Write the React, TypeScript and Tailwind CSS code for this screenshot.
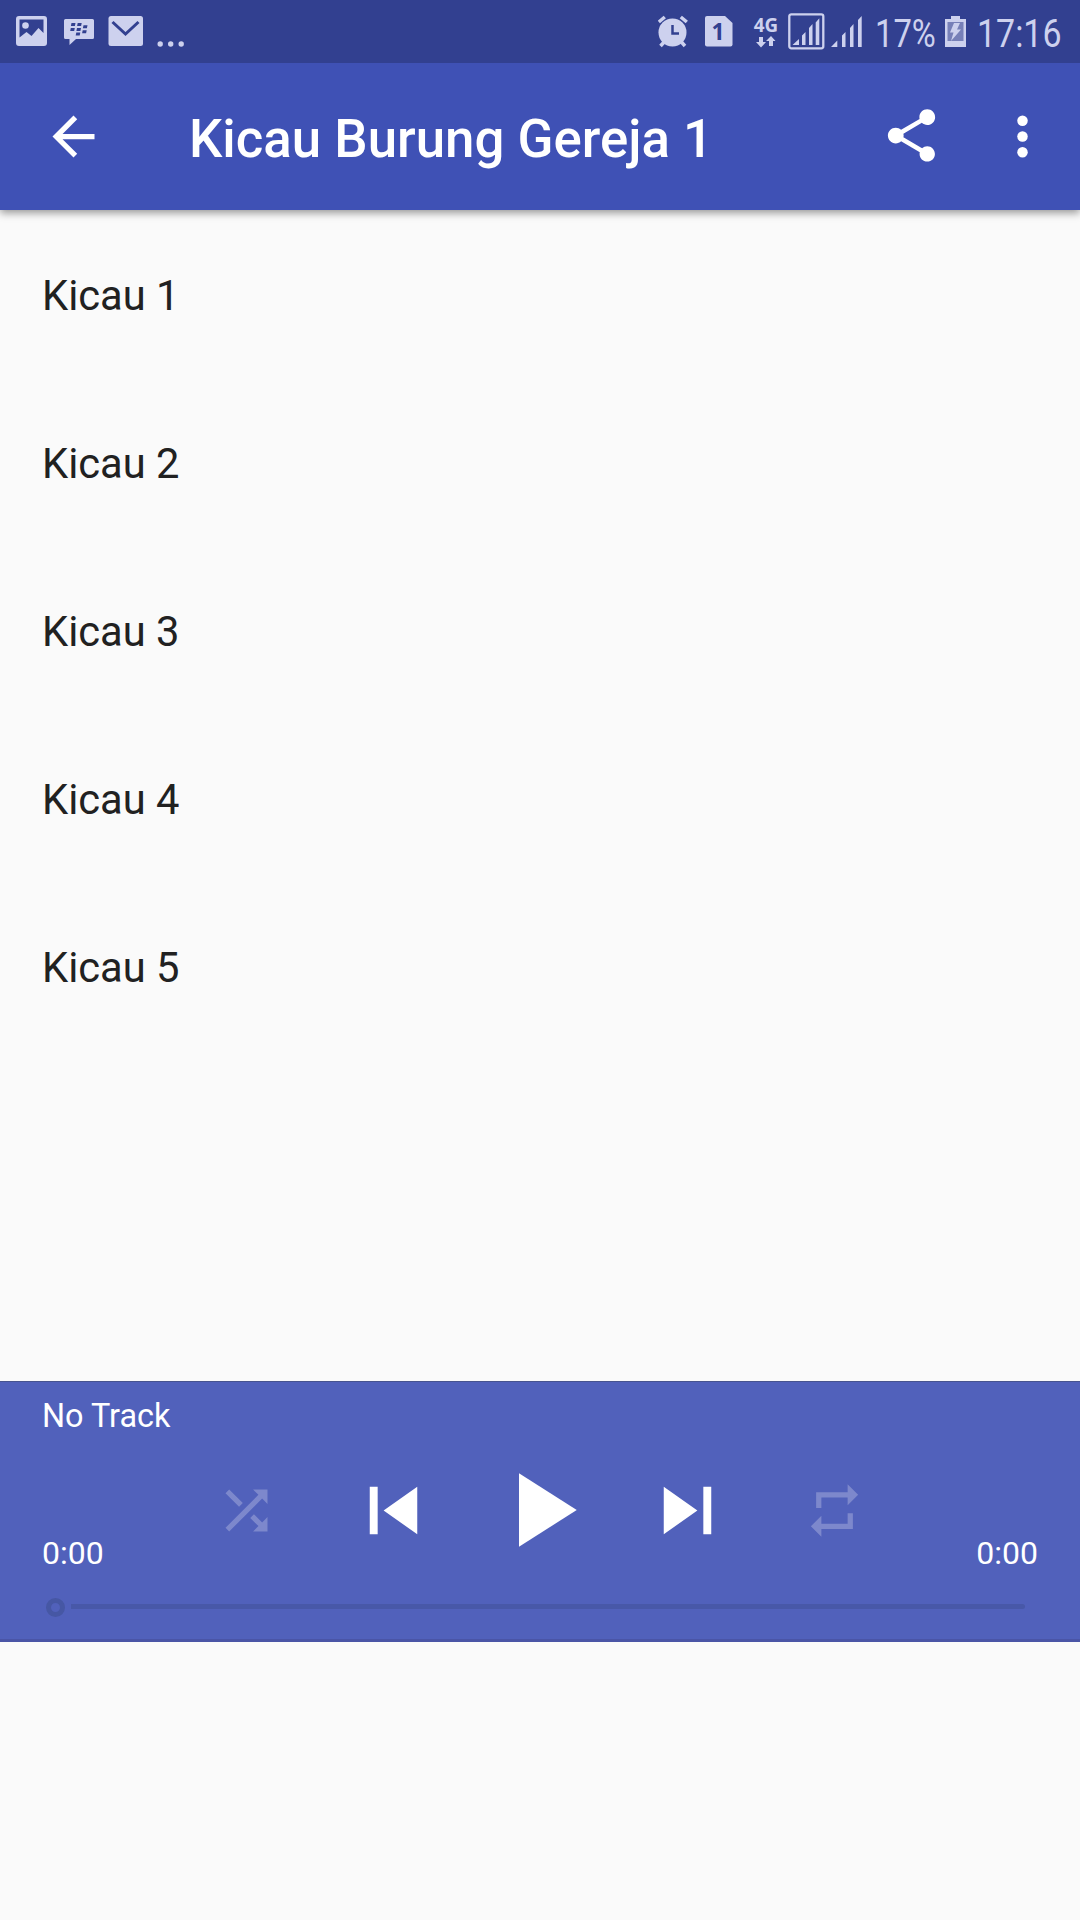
import type { ReactNode } from "react";

const tracks = ["Kicau 1", "Kicau 2", "Kicau 3", "Kicau 4", "Kicau 5"];

interface IconProps {
	className: string;
	children: ReactNode;
}

function Icon({ className, children }: IconProps) {
	return (
		<svg viewBox="0 0 24 24" fill="currentColor" className={`shrink-0 ${className}`}>
			{children}
		</svg>
	);
}

function StatusBar() {
	return (
		<div className="relative z-10 flex h-[63px] items-start justify-between bg-[#324090] text-[#cdd1ee]">
			<div className="flex pl-4 pt-4">
				<svg width="31" height="30" viewBox="0 0 31 30" fill="currentColor">
					<path
						fillRule="evenodd"
						d="M3 0h25a3 3 0 0 1 3 3v24a3 3 0 0 1-3 3H3a3 3 0 0 1-3-3V3a3 3 0 0 1 3-3zM3.500 3.500V21.500L10.500 16l5 4 7-8 5 5V3.500z"
					/>
					<circle cx="9.500" cy="9.500" r="3.300" />
				</svg>
				<svg width="30" height="30" viewBox="0 0 30 30" fill="currentColor" className="ml-[17px]">
					<path d="M1.500 3h27A1.500 1.500 0 0 1 30 4.500v17a1.500 1.500 0 0 1-1.500 1.500H12l-6.500 6V23h-4A1.500 1.500 0 0 1 0 21.500v-17A1.500 1.500 0 0 1 1.500 3z" />
					<path
						fill="#324090"
						d="M7.500 7h4l-.6 3h-4zM13.700 7h4l-.6 3h-4zM6.800 12h4l-.6 3h-4zM13 12h4l-.6 3h-4zM19.500 9.300h4l-.6 3h-4zM18.700 14.200h4l-.6 3h-4zM12.300 16.500h4l-.6 3h-4z"
					/>
				</svg>
				<svg width="35" height="30" viewBox="0 0 35 30" fill="currentColor" className="ml-[14px]">
					<rect x="0.500" width="34.500" height="30" rx="2.500" />
					<path d="M4.500 6L17.500 18L30.500 6" fill="none" stroke="#324090" strokeWidth="3" />
				</svg>
				<svg width="28" height="31" viewBox="0 0 28 31" fill="currentColor" className="ml-[14px]">
					<circle cx="3.200" cy="28" r="2.700" />
					<circle cx="13.700" cy="28" r="2.700" />
					<circle cx="24.200" cy="28" r="2.700" />
				</svg>
			</div>

			<div className="flex pr-[18px] pt-[13px]">
				<svg width="31" height="37" viewBox="0 0 31 37" fill="currentColor">
					<circle cx="14.500" cy="19.500" r="14" />
					<path
						d="M.8 9l6-5M28.800 9l-6-5M2.500 33l4.500-5M27 33l-4.500-5"
						stroke="currentColor"
						strokeWidth="3.500"
					/>
					<path d="M14.500 12v8.500h6.500" fill="none" stroke="#324090" strokeWidth="2.500" />
				</svg>
				<svg width="28" height="37" viewBox="0 0 28 37" fill="currentColor" className="ml-4">
					<path d="M2 3h18l7.500 7v21.500a2 2 0 0 1-2 2H2a2 2 0 0 1-2-2V5a2 2 0 0 1 2-2z" />
					<text
						x="13"
						y="27"
						textAnchor="middle"
						fill="#324090"
						className="font-['Noto_Sans',sans-serif] text-[23px] font-bold"
					>
						1
					</text>
				</svg>
				<div className="ml-[19px] flex w-[28px] flex-col items-center">
					<span className="mt-[3px] origin-center scale-x-[0.94] font-['Noto_Sans',sans-serif] text-[20px] leading-[18px] font-bold">
						4G
					</span>
					<svg width="20" height="12" viewBox="0 0 20 12" fill="currentColor" className="mt-[2px]">
						<path d="M3 1h4v5h3l-5 5.500L0 6h3zM13 10h4V5h2.500L15 0l-5 5h3z" />
					</svg>
				</div>
				<svg width="37" height="37" viewBox="0 0 37 37" fill="currentColor" className="ml-[8px]">
					<rect x="1.300" y="1.300" width="34" height="34" rx="2" fill="none" stroke="currentColor" strokeWidth="2.300" />
					<path d="M4.500 32l6.500-6v6zM14 32v-9.500l3.500-3.500v13zM21 32V15l3.500-4v21zM27.700 32V9.500l3.600-4.200V32z" />
				</svg>
				<svg width="33" height="37" viewBox="0 0 33 37" fill="currentColor" className="ml-[6px]">
					<path d="M0 34l6.300-6.500V34zM11 34V22.500l3.500-3.500v15zM19 34V15l3.500-4v23zM27 34V7l3.700-4v31z" />
				</svg>
				<div className="ml-[11px] h-[37px] w-[63px] origin-left scale-x-[0.84] whitespace-nowrap text-[39px] leading-[42px]">
					17%
				</div>
				<svg width="21" height="37" viewBox="0 0 21 37" fill="currentColor" className="ml-[7px]">
					<path d="M6 3h9v3h6v28H0V6h6z" />
					<path d="M2.500 9h16v19h-16z" fill="#7780b8" />
					<path d="M9 10h6l-3 6.500h4L6 28l2.500-8.500H5z" />
				</svg>
				<div className="ml-[11px] h-[37px] w-[85px] origin-left scale-x-[0.87] whitespace-nowrap text-[39px] leading-[42px]">
					17:16
				</div>
			</div>
		</div>
	);
}

function AppBar() {
	return (
		<header className="relative flex h-[147px] items-center bg-[#3f51b5] pl-[42px] text-white shadow-[0_3px_8px_rgba(0,0,0,0.4)]">
			<Icon className="size-[63px]">
				<path d="M20 11H7.830l5.590-5.590L12 4l-8 8 8 8 1.410-1.410L7.830 13H20v-2z" />
			</Icon>
			<h1 className="ml-[84px] flex-1 pt-[7px] text-[52.8px] font-medium">Kicau Burung Gereja 1</h1>
			<Icon className="mb-[2px] size-[63px]">
				<path d="M18 16.080c-.76 0-1.440.3-1.960.77L8.910 12.700c.05-.23.09-.46.09-.7s-.04-.47-.09-.7l7.050-4.110c.54.5 1.250.81 2.040.81 1.660 0 3-1.340 3-3s-1.340-3-3-3-3 1.340-3 3c0 .24.04.47.09.7L8.040 9.810C7.500 9.310 6.790 9 6 9c-1.660 0-3 1.340-3 3s1.340 3 3 3c.79 0 1.500-.31 2.040-.81l7.120 4.160c-.05.21-.08.43-.08.65 0 1.610 1.310 2.920 2.920 2.920s2.920-1.310 2.920-2.920-1.310-2.920-2.920-2.920z" />
			</Icon>
			<Icon className="mr-[26px] ml-[48px] size-[63px]">
				<circle cx="12" cy="6" r="2" />
				<circle cx="12" cy="12" r="2" />
				<circle cx="12" cy="18" r="2" />
			</Icon>
		</header>
	);
}

function Player() {
	return (
		<section className="flex h-[261px] flex-col border-t border-b-[3px] border-t-[#47548f] border-b-[#4a55a6] bg-[#5161bb] px-[42px] text-[32px] text-white">
			<div className="mt-[16px] h-[37px] text-[32.4px] leading-[37px]">No Track</div>
			<div className="mt-[12px] flex h-[126px] justify-between">
				<span className="mb-px w-[130px] self-end leading-[37px]">0:00</span>
				<div className="grid w-[735px] grid-cols-5 place-items-center">
					<Icon className="size-[63px] text-[#7d88cc]">
						<path d="M10.590 9.170L5.410 4 4 5.410l5.170 5.170 1.420-1.410zM14.500 4l2.040 2.040L4 18.590 5.410 20 17.960 7.460 20 9.500V4h-5.500zm.33 9.410l-1.410 1.410 3.130 3.130L14.500 20H20v-5.500l-2.040 2.040-3.130-3.130z" />
					</Icon>
					<Icon className="size-[95px]">
						<path d="M6 6h2v12H6zm3.500 6l8.500 6V6z" />
					</Icon>
					<Icon className="size-[126px]">
						<path d="M8 5v14l11-7z" />
					</Icon>
					<Icon className="size-[95px]">
						<path d="M6 18l8.500-6L6 6v12zM16 6v12h2V6h-2z" />
					</Icon>
					<Icon className="size-[63px] text-[#7d88cc]">
						<path d="M7 7h10v3l4-4-4-4v3H5v6h2V7zm10 10H7v-3l-4 4 4 4v-3h12v-6h-2v4z" />
					</Icon>
				</div>
				<span className="mb-px w-[130px] self-end text-right leading-[37px]">0:00</span>
			</div>
			<div className="mt-[25px] flex h-[19px] items-center pr-[13px] pl-[4px]">
				<div className="size-[19px] rounded-full border-[5px] border-[#4657a4]" />
				<div className="mb-[2px] ml-[6px] h-[5px] flex-1 rounded-r-sm bg-[#4858a8]" />
			</div>
		</section>
	);
}

export default function App() {
	return (
		<div className="flex h-[1920px] w-[1080px] flex-col overflow-hidden bg-[#fafafa] font-[Roboto,sans-serif]">
			<StatusBar />
			<AppBar />
			<ul className="h-[1171px] pt-[2px] text-[41.7px] text-[#212121]">
				{tracks.map((track) => (
					<li key={track} className="flex h-[168px] items-center px-[42px]">
						{track}
					</li>
				))}
			</ul>
			<Player />
		</div>
	);
}
